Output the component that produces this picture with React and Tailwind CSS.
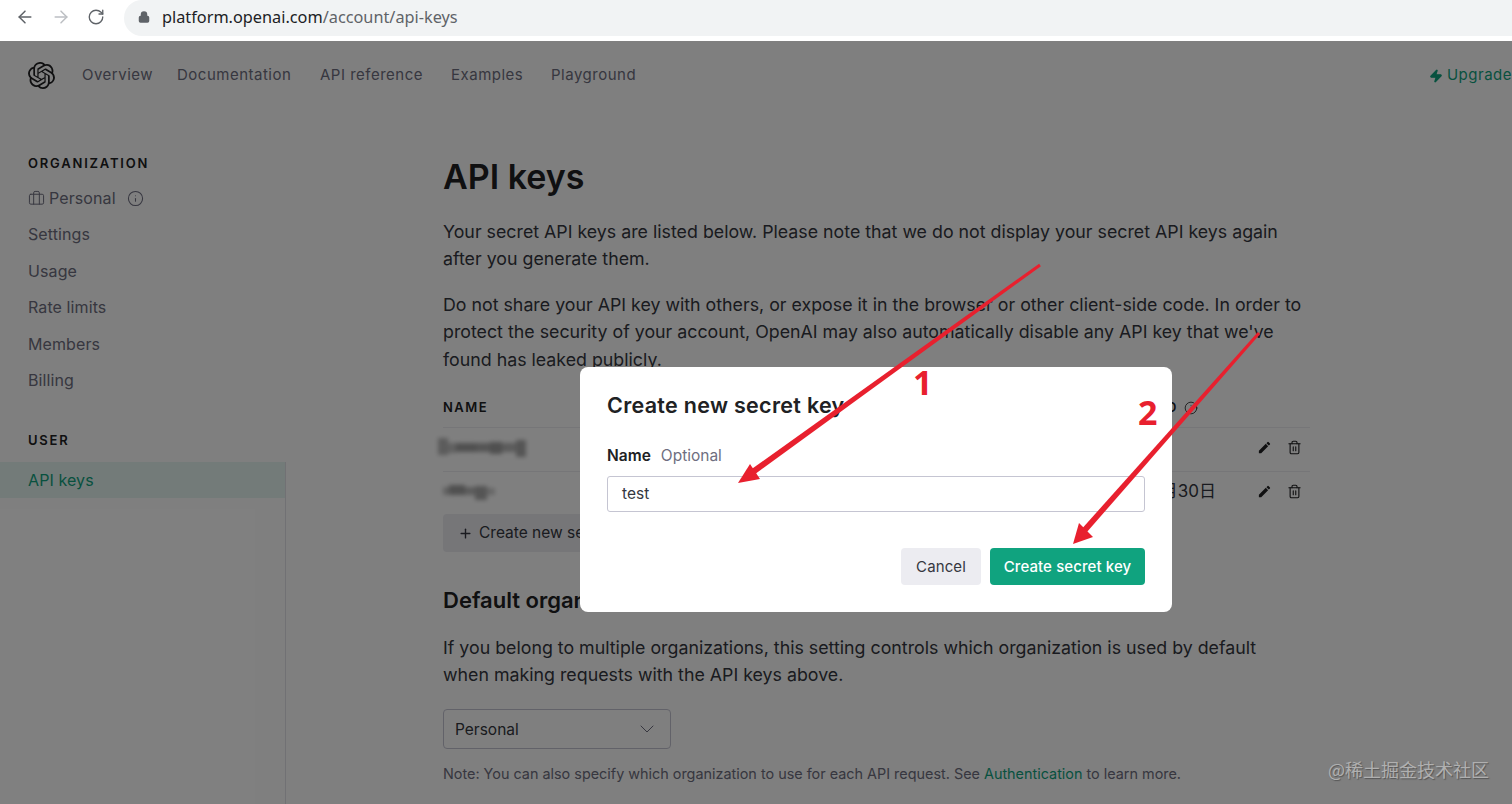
import { ArrowLeft, ArrowRight, RotateCw, Lock, Briefcase, Info, Plus, Trash2, ChevronDown, Zap } from 'lucide-react';
import { MdEdit } from 'react-icons/md';

const navLinks = [
  { label: 'Overview', width: 'w-[95px]' },
  { label: 'Documentation', width: 'w-[143px]' },
  { label: 'API reference', width: 'w-[131px]' },
  { label: 'Examples', width: 'w-[100px]' },
  { label: 'Playground', width: 'w-[90px]' },
];
const orgLinks = ['Settings', 'Usage', 'Rate limits', 'Members', 'Billing'];

function OpenAILogo() {
  return (
    <svg viewBox="0 0 24 24" className="w-[27px] h-[27px] fill-[#202123]">
      <path d="M22.2819 9.8211a5.9847 5.9847 0 0 0-.5157-4.9108 6.0462 6.0462 0 0 0-6.5098-2.9A6.0651 6.0651 0 0 0 4.9807 4.1818a5.9847 5.9847 0 0 0-3.9977 2.9 6.0462 6.0462 0 0 0 .7427 7.0966 5.98 5.98 0 0 0 .511 4.9107 6.051 6.051 0 0 0 6.5146 2.9001A5.9847 5.9847 0 0 0 13.2599 24a6.0557 6.0557 0 0 0 5.7718-4.2058 5.9894 5.9894 0 0 0 3.9977-2.9001 6.0557 6.0557 0 0 0-.7475-7.0729zm-9.022 12.6081a4.4755 4.4755 0 0 1-2.8764-1.0408l.1419-.0804 4.7783-2.7582a.7948.7948 0 0 0 .3927-.6813v-6.7369l2.02 1.1686a.071.071 0 0 1 .038.052v5.5826a4.504 4.504 0 0 1-4.4945 4.4944zm-9.6607-4.1254a4.4708 4.4708 0 0 1-.5346-3.0137l.142.0852 4.783 2.7582a.7712.7712 0 0 0 .7806 0l5.8428-3.3685v2.3324a.0804.0804 0 0 1-.0332.0615L9.74 19.9502a4.4992 4.4992 0 0 1-6.1408-1.6464zM2.3408 7.8956a4.485 4.485 0 0 1 2.3655-1.9728V11.6a.7664.7664 0 0 0 .3879.6765l5.8144 3.3543-2.0201 1.1685a.0757.0757 0 0 1-.071 0l-4.8303-2.7865A4.504 4.504 0 0 1 2.3408 7.872zm16.5963 3.8558L13.1038 8.364 15.1192 7.2a.0757.0757 0 0 1 .071 0l4.8303 2.7913a4.4944 4.4944 0 0 1-.6765 8.1042v-5.6772a.79.79 0 0 0-.407-.667zm2.0107-3.0231l-.142-.0852-4.7735-2.7818a.7759.7759 0 0 0-.7854 0L9.409 9.2297V6.8974a.0662.0662 0 0 1 .0284-.0615l4.8303-2.7866a4.4992 4.4992 0 0 1 6.6802 4.66zM8.3065 12.863l-2.02-1.1638a.0804.0804 0 0 1-.038-.0567V6.0742a4.4992 4.4992 0 0 1 7.3757-3.4537l-.142.0805L8.704 5.459a.7948.7948 0 0 0-.3927.6813zm1.0976-2.3654l2.602-1.4998 2.6069 1.4998v2.9994l-2.5974 1.4997-2.6067-1.4997Z" />
    </svg>
  );
}

function BrowserBar() {
  return (
    <div className="h-[41px] bg-white flex items-start flex-shrink-0 font-['Noto_Sans',sans-serif]">
      <div className="flex items-center h-[33px] pl-[15px] gap-[16px] w-[124px]">
        <ArrowLeft size={20} strokeWidth={1.8} className="text-[#5f6368]" />
        <ArrowRight size={20} strokeWidth={1.8} className="text-[#bcbfc3]" />
        <RotateCw size={18} strokeWidth={1.8} className="text-[#5f6368]" />
      </div>
      <div className="flex-1 h-[36px] pb-[2px] bg-[#f1f3f4] rounded-l-[18px] flex items-center pl-[14px] gap-[12px]">
        <Lock size={12} strokeWidth={3} className="text-[#5f6368] fill-[#5f6368]" />
        <span className="text-[16.3px] text-[#5f6368]">
          <span className="text-[#202124]">platform.openai.com</span>/account/api-keys
        </span>
      </div>
    </div>
  );
}

function TopNav() {
  return (
    <div className="h-[69px] flex items-center pl-[28px] flex-shrink-0">
      <OpenAILogo />
      <div className="flex items-center ml-[27px] text-[15px] tracking-[0.5px] text-[#6e6e80] whitespace-nowrap">
        {navLinks.map((l) => (
          <span key={l.label} className={l.width}>{l.label}</span>
        ))}
      </div>
      <div className="ml-auto flex items-center gap-[4px] text-[15px] text-[#10a37f] tracking-[0.5px]">
        <Zap size={14} className="fill-[#10a37f]" />
        <span>Upgrade</span>
      </div>
    </div>
  );
}

function Sidebar() {
  return (
    <div className="w-[286px] flex-shrink-0 flex flex-col pt-[44px] text-[16px] tracking-[0.1px] text-[#6e6e80]">
      <div className="pl-[28px] h-[18px] leading-[18px] text-[13px] font-semibold tracking-[1.8px] text-[#202123]">ORGANIZATION</div>
      <div className="pl-[28px] h-[36px] mt-[8px] flex items-center">
        <Briefcase size={17} strokeWidth={1.4} />
        <span className="ml-[4px]">Personal</span>
        <Info size={17} strokeWidth={1.5} className="ml-[11px]" />
      </div>
      {orgLinks.map((l) => (
        <div key={l} className="pl-[28px] h-[36.5px] flex items-center">{l}</div>
      ))}
      <div className="pl-[28px] h-[18px] leading-[18px] mt-[32.5px] text-[13px] font-semibold tracking-[1.8px] text-[#202123]">USER</div>
      <div className="pl-[28px] h-[36px] mt-[13px] flex items-center bg-[#e7f6f2] text-[#10a37f] border-r border-[#e3e3e8]">API keys</div>
      <div className="flex-1 border-r border-[#e3e3e8]" />
    </div>
  );
}

function Mosaic({ blocks }) {
  return (
    <div className="flex items-center blur-[2px]">
      {blocks.map((b, i) => (
        <div key={i} style={{ width: b[0], height: b[1], marginTop: b[2], opacity: b[3] }} className="bg-[#888]" />
      ))}
    </div>
  );
}

function KeyRow({ blocks, date, shift }) {
  return (
    <div className="h-[43.5px] pb-[3px] flex items-center border-t border-[#ececf1] text-[#353740]">
      <div className={shift}>
        <Mosaic blocks={blocks} />
      </div>
      <span className="ml-auto text-[17px] font-['Inter','Noto_Sans_CJK_SC',sans-serif]">{date}</span>
      <MdEdit size={15} className="ml-[41px] text-[#202123]" />
      <Trash2 size={15} strokeWidth={1.8} className="ml-[15px] mr-[8px] text-[#202123]" />
    </div>
  );
}

function MainContent() {
  return (
    <div className="pl-[157px] pt-[45px] w-[1024px] text-[#353740]">
      <h1 className="h-[44px] leading-[44px] text-[34px] font-semibold text-[#202123]">API keys</h1>
      <p className="mt-[19px] text-[17.8px] leading-[27.4px]">
        Your secret API keys are listed below. Please note that we do not display your secret API keys again after you generate them.
      </p>
      <p className="mt-[18px] text-[17.8px] leading-[27.4px]">
        Do not share your API key with others, or expose it in the browser or other client-side code. In order to protect the security of your account, OpenAI may also automatically disable any API key that we've found has leaked publicly.
      </p>
      <div className="mt-[14px]">
        <div className="h-[40px] pt-[1px] flex items-center text-[13px] font-semibold tracking-[1.5px] text-[#202123]">
          <span>NAME</span>
          <span className="ml-auto mr-[112px] flex items-center gap-[6px]">
            LAST USED
            <Info size={14} strokeWidth={1.4} />
          </span>
        </div>
        <KeyRow shift="-ml-[5px]" date="" blocks={[[10, 17, -2, 0.6], [8, 10, 0, 0.5], [20, 9, 0, 0.8], [14, 9, 0, 0.7], [12, 12, 1, 0.8], [14, 9, 0, 0.6], [10, 17, 2, 0.7]]} />
        <KeyRow shift="" date="2023年3月30日" blocks={[[6, 8, 0, 0.5], [16, 10, -2, 0.8], [10, 8, 0, 0.6], [12, 14, 4, 0.7], [8, 7, 0, 0.4]]} />
      </div>
      <button className="h-[38px] pl-[15px] pr-[16px] rounded-[4px] bg-[#ececf1] flex items-center gap-[6px] text-[15.5px] text-[#353740]">
        <Plus size={15} strokeWidth={2.2} />
        Create new secret key
      </button>
      <h2 className="mt-[32px] h-[32px] leading-[32px] text-[22px] font-semibold text-[#202123]">Default organization</h2>
      <p className="mt-[18px] text-[17.8px] leading-[27.4px]">
        If you belong to multiple organizations, this setting controls which organization is used by default<br />when making requests with the API keys above.
      </p>
      <div className="mt-[20px] w-[228px] h-[40px] pl-[11px] pr-[11px] pt-[1px] flex items-center justify-between border border-[#c5c5d2] rounded-[4px] text-[15.5px]">
        Personal
        <ChevronDown size={24} strokeWidth={1} className="text-[#6e6e80]" />
      </div>
      <p className="mt-[15px] text-[14.4px] leading-[20px] text-[#6e6e80] whitespace-nowrap">
        Note: You can also specify which organization to use for each API request. See <span className="text-[#10a37f]">Authentication</span> to learn more.
      </p>
    </div>
  );
}

function Modal() {
  return (
    <div className="absolute left-[580px] top-[326px] w-[592px] h-[245px] bg-white rounded-[8px] px-[27px] pt-[24px] text-[#353740]">
      <h3 className="h-[28px] leading-[28px] text-[21.5px] tracking-[0.3px] font-semibold text-[#202123]">Create new secret key</h3>
      <div className="mt-[27px] h-[20px] leading-[20px] text-[15.5px]">
        <span className="font-semibold text-[#202123]">Name</span>
        <span className="ml-[10px] text-[#6e6e80]">Optional</span>
      </div>
      <div className="mt-[10px] h-[36px] pl-[14px] flex items-center border border-[#c5c5d2] rounded-[3px] text-[15.5px]">test</div>
      <div className="mt-[36px] flex justify-end gap-[9px] text-[15px] tracking-[0.1px]">
        <button className="w-[80px] h-[37px] pt-[1px] rounded-[4px] bg-[#ececf1] text-[#353740]">Cancel</button>
        <button className="w-[155px] h-[37px] pt-[1px] rounded-[4px] bg-[#10a37f] text-white font-medium">Create secret key</button>
      </div>
    </div>
  );
}

function Annotations() {
  return (
    <>
      <svg className="absolute left-0 top-0 w-[1512px] h-[804px]" viewBox="0 0 1512 804">
        <polygon points="1040.9,266.2 1039.1,263.8 748.2,471.6 751.8,476.4" fill="#e8202e" />
        <polygon points="738,483 750,464 760,479" fill="#e8202e" />
        <polygon points="1260.1,334 1257.9,332 1080.8,530 1085.2,534" fill="#e8202e" />
        <polygon points="1073,544 1079,523 1093,537" fill="#e8202e" />
      </svg>
      <span className="absolute left-[913px] top-[358px] text-[34px] leading-[48px] font-bold text-[#e8202e] font-['Open_Sans',sans-serif]">1</span>
      <span className="absolute left-[1138px] top-[388px] text-[34px] leading-[48px] font-bold text-[#e8202e] font-['Open_Sans',sans-serif]">2</span>
      <span className="absolute left-[1328px] top-[756px] text-[18px] leading-[26px] text-[#b0b0b0] [text-shadow:1px_1px_1px_#555] font-['Noto_Sans_CJK_SC',sans-serif]">@稀土掘金技术社区</span>
    </>
  );
}

export default function App() {
  return (
    <div className="relative w-[1512px] h-[804px] overflow-hidden flex flex-col bg-white font-['Inter',sans-serif]">
      <BrowserBar />
      <div className="relative flex-1 flex flex-col overflow-hidden">
        <TopNav />
        <div className="flex flex-1">
          <Sidebar />
          <MainContent />
        </div>
        <div className="absolute inset-0 bg-black/50" />
        <div className="absolute left-0 top-0 w-full h-full">
          <Modal />
        </div>
      </div>
      <Annotations />
    </div>
  );
}
